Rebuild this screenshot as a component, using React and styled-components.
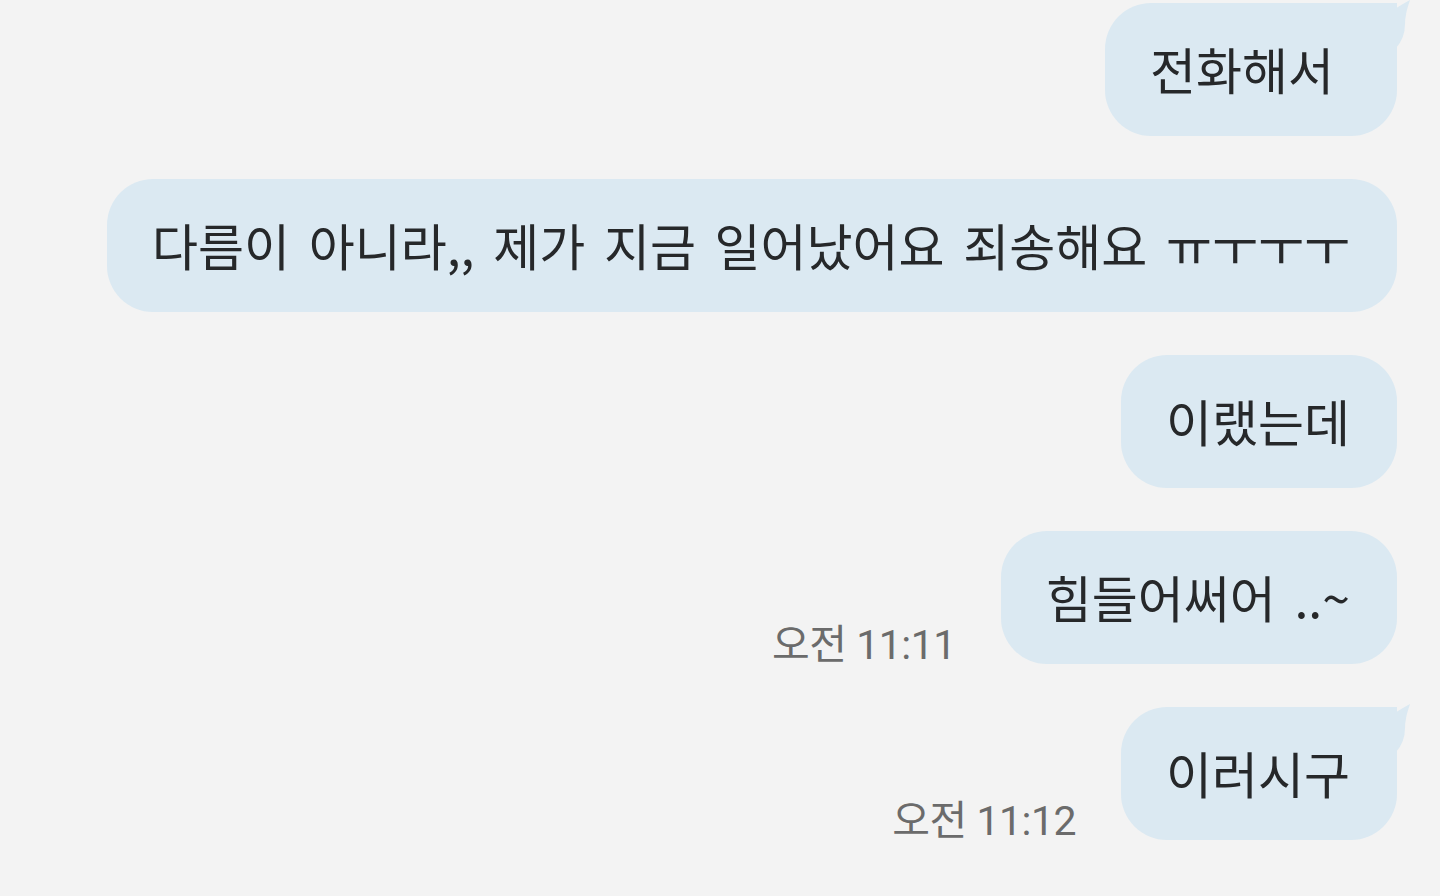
import React from 'react'
import styled, { createGlobalStyle } from 'styled-components'

const GlobalStyle = createGlobalStyle`
  html, body {
    margin: 0;
    padding: 0;
    background: #f3f3f3;
  }
  body {
    font-family: 'Noto Sans CJK KR', 'Noto Sans', sans-serif;
  }
`

const BUBBLE = '#dbe9f2'

const messages = [
  { id: 1, text: '전화해서', tail: true, extra: 16 },
  { id: 2, text: '다름이 아니라,, 제가 지금 일어났어요 죄송해요 ㅠㅜㅜㅜ' },
  { id: 3, text: '이랬는데' },
  { id: 4, text: '힘들어써어 ..~', time: '오전 11:11' },
  { id: 5, text: '이러시구', tail: true, time: '오전 11:12' },
]

const Screen = styled.div`
  width: 1440px;
  height: 896px;
  overflow: hidden;
  display: flex;
  flex-direction: column;
  align-items: flex-end;
  gap: 43px;
  padding: 3px 43px 0 0;
  box-sizing: border-box;
  background: #f3f3f3;
`

const Row = styled.div`
  display: flex;
  align-items: flex-end;
  gap: 45px;
`

const Time = styled.span`
  font-family: 'Roboto', 'Noto Sans CJK KR', sans-serif;
  font-size: 41px;
  line-height: 1;
  color: #6b6b6b;
  margin-bottom: -2px;
  white-space: nowrap;
  letter-spacing: -0.5px;
`

const Bubble = styled.div`
  position: relative;
  height: 133px;
  box-sizing: border-box;
  display: flex;
  align-items: center;
  padding: 0 ${({ $extra }) => 47 + ($extra || 0)}px 3px 45px;
  background: ${BUBBLE};
  border-radius: 46px;
  border-top-right-radius: ${({ $tail }) => ($tail ? '0' : '46px')};
  font-size: 50px;
  word-spacing: 7.5px;
  color: #26282a;
  white-space: nowrap;
`

const Tail = styled.svg`
  position: absolute;
  top: -3px;
  right: -13px;
  width: 44px;
  height: 48px;
`

const TailShape = () => (
  <Tail viewBox="0 0 44 48">
    <path
      d="M0 3 L14 3 Q22 8 26 11 Q33 6 44 0 Q39 14 39 24 Q39 38 30 48 L0 48 Z"
      fill={BUBBLE}
    />
  </Tail>
)

const App = () => {
  return (
    <>
      <GlobalStyle />
      <Screen>
        {messages.map((m) => (
          <Row key={m.id}>
            {m.time && <Time>{m.time}</Time>}
            <Bubble $tail={m.tail} $extra={m.extra}>
              {m.tail && <TailShape />}
              {m.text}
            </Bubble>
          </Row>
        ))}
      </Screen>
    </>
  )
}

export default App
